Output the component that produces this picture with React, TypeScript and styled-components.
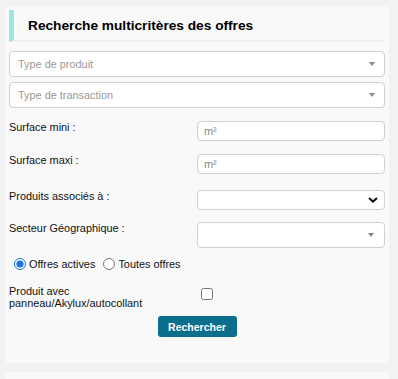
import React, { useState } from "react";
import styled, { createGlobalStyle } from "styled-components";

const GlobalStyle = createGlobalStyle`
	html, body {
		margin: 0;
		padding: 0;
		background: #f2f2f2;
		font-family: "Liberation Sans", Arial, sans-serif;
		color: #111111;
	}
`;

const Page = styled.div`
	width: 398px;
	height: 379px;
	box-sizing: border-box;
	padding: 6px 9px 0 5px;
	display: flex;
	flex-direction: column;
	gap: 9px;
	overflow: hidden;
`;

const Panel = styled.div`
	background: #f9f9f9;
	border-radius: 4px;
	padding: 4px 4px 26px 4px;
	display: flex;
	flex-direction: column;
`;

const NextPanel = styled.div`
	background: #f9f9f9;
	border-radius: 4px;
	height: 40px;
	flex-shrink: 0;
`;

const Header = styled.div`
	height: 30px;
	border-left: 5px solid #9fe4df;
	border-bottom: 2px solid #eeeeee;
	padding-left: 14px;
	display: flex;
	align-items: center;
	font-size: 13.7px;
	font-weight: bold;
	color: #000000;
`;

const SelectBox = styled.div<{ $mt?: number }>`
	margin-top: ${(p) => p.$mt ?? 5}px;
	height: 26px;
	box-sizing: border-box;
	border: 1px solid #cdd0d6;
	border-radius: 4px;
	background: #ffffff;
	display: flex;
	align-items: center;
	justify-content: space-between;
	padding: 0 9px 0 8px;
	font-size: 10.9px;
	color: #999999;
`;

const Triangle = styled.span`
	width: 0;
	height: 0;
	border-left: 3px solid transparent;
	border-right: 3px solid transparent;
	border-top: 4px solid #888888;
`;

const FieldRow = styled.div<{ $mt: number }>`
	margin-top: ${(p) => p.$mt}px;
	display: grid;
	grid-template-columns: 188px 188px;
	align-items: start;
`;

const Label = styled.label`
	font-size: 10.9px;
	line-height: 13px;
`;

const TextInput = styled.div`
	height: 20px;
	box-sizing: border-box;
	border: 1px solid #cdd0d6;
	border-radius: 4px;
	background: #ffffff;
	display: flex;
	align-items: center;
	padding-left: 6px;
	font-size: 10.9px;
	color: #888888;
`;

const NativeSelect = styled.div<{ $h: number; $pr: number }>`
	height: ${(p) => p.$h}px;
	box-sizing: border-box;
	border: 1px solid #cdd0d6;
	border-radius: 4px;
	background: #ffffff;
	display: flex;
	align-items: center;
	justify-content: flex-end;
	padding-right: ${(p) => p.$pr}px;
`;

const RadioRow = styled.div`
	margin-top: 9px;
	display: flex;
	align-items: center;
	height: 14px;
	font-size: 10.9px;
`;

const RadioOption = styled.label`
	display: flex;
	align-items: center;
	margin-right: 3px;

	input {
		width: 12px;
		height: 12px;
		margin: 0 3px 0 5px;
		accent-color: #1a73e8;
	}
`;

const CheckRow = styled.div`
	margin-top: 14px;
	display: grid;
	grid-template-columns: 188px 188px;
	align-items: start;
`;

const CheckLabel = styled.div`
	font-size: 10.9px;
	line-height: 12px;
`;

const Check = styled.input`
	width: 12px;
	height: 12px;
	margin: 3px 0 0 4px;
`;

const ButtonRow = styled.div`
	margin-top: 7px;
	display: flex;
	justify-content: center;
`;

const SearchButton = styled.button`
	width: 79px;
	height: 21px;
	border: none;
	border-radius: 3px;
	background: #0b6e8d;
	color: #ffffff;
	font-family: "Liberation Sans", Arial, sans-serif;
	font-size: 10.5px;
	font-weight: bold;
	padding: 0;
	cursor: pointer;
`;

const Chevron = () => (
	<svg width="10" height="6" viewBox="0 0 10 6">
		<path d="M1 1 L5 4.6 L9 1" fill="none" stroke="#111" strokeWidth="2" />
	</svg>
);

export default function App() {
	const [mode, setMode] = useState("actives");

	return (
		<>
			<GlobalStyle />
			<Page>
				<Panel>
					<Header>Recherche multicritères des offres</Header>

					<SelectBox $mt={9}>
						Type de produit
						<Triangle />
					</SelectBox>
					<SelectBox>
						Type de transaction
						<Triangle />
					</SelectBox>

					<FieldRow $mt={13}>
						<Label>Surface mini :</Label>
						<TextInput>m²</TextInput>
					</FieldRow>
					<FieldRow $mt={13}>
						<Label>Surface maxi :</Label>
						<TextInput>m²</TextInput>
					</FieldRow>
					<FieldRow $mt={16}>
						<Label>Produits associés à :</Label>
						<NativeSelect $h={20} $pr={6}>
							<Chevron />
						</NativeSelect>
					</FieldRow>
					<FieldRow $mt={12}>
						<Label>Secteur Géographique :</Label>
						<NativeSelect $h={26} $pr={10}>
							<Triangle />
						</NativeSelect>
					</FieldRow>

					<RadioRow>
						<RadioOption>
							<input
								type="radio"
								name="mode"
								checked={mode === "actives"}
								onChange={() => setMode("actives")}
							/>
							Offres actives
						</RadioOption>
						<RadioOption>
							<input
								type="radio"
								name="mode"
								checked={mode === "toutes"}
								onChange={() => setMode("toutes")}
							/>
							Toutes offres
						</RadioOption>
					</RadioRow>

					<CheckRow>
						<CheckLabel>
							Produit avec
							<br />
							panneau/Akylux/autocollant
						</CheckLabel>
						<div>
							<Check type="checkbox" />
						</div>
					</CheckRow>

					<ButtonRow>
						<SearchButton>Rechercher</SearchButton>
					</ButtonRow>
				</Panel>
				<NextPanel />
			</Page>
		</>
	);
}
